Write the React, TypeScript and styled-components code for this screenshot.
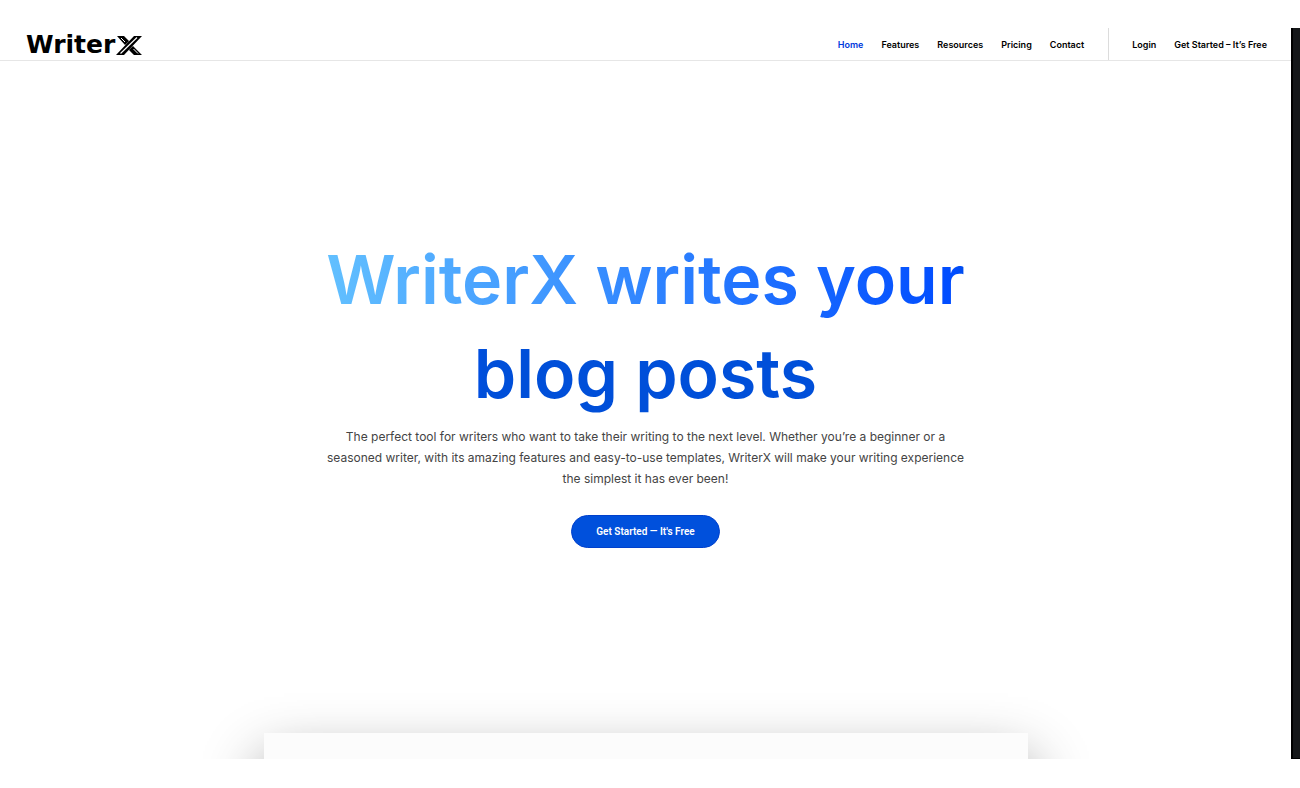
import React from "react";
import styled, { createGlobalStyle } from "styled-components";

const GlobalStyle = createGlobalStyle`
  *, *::before, *::after { box-sizing: border-box; }
  body {
    margin: 0;
    background: #fff;
    color: #0b0b0b;
    font-family: Inter, "Liberation Sans", sans-serif;
  }
  a { color: inherit; text-decoration: none; }
`;

const Frame = styled.div`
  display: flex;
  height: 100vh;
  min-height: 640px;
  padding: 28px 0 29px;
`;

const Page = styled.div`
  flex: 1;
  min-width: 0;
  display: flex;
  flex-direction: column;
  overflow: hidden;
`;

const Edge = styled.div`
  width: 9px;
  background: #151719;
  border: 2px solid #000;
  border-width: 0 0 1px 2px;
`;

const Header = styled.header`
  display: flex;
  flex: none;
  justify-content: space-between;
  height: 33px;
  padding: 0 24px 0 26px;
  border-bottom: 1px solid #e6e6e6;
`;

const Logo = styled.a`
  display: flex;
  align-items: center;
  gap: 1px;
  padding-top: 2px;
  font-family: "DejaVu Sans", sans-serif;
  font-size: 25px;
  font-weight: 700;
  line-height: 30px;
  color: #000;
`;

const Menu = styled.div`
  display: flex;
`;

const LinkGroup = styled.nav<{ $divided?: boolean }>`
  display: flex;
  align-items: center;
  gap: 18px;
  padding-top: 2px;
  padding-left: ${(p) => (p.$divided ? 23 : 0)}px;
  margin-left: ${(p) => (p.$divided ? 24 : 0)}px;
  border-left: ${(p) => (p.$divided ? "1px solid #dcdcdc" : "0")};
`;

const NavLink = styled.a<{ $active?: boolean }>`
  font-size: 9px;
  font-weight: 600;
  line-height: 12px;
  color: ${(p) => (p.$active ? "#0038dc" : "#000")};
`;

const Hero = styled.main`
  display: flex;
  flex-direction: column;
  align-items: center;
  padding-top: 171px;
  text-align: center;
`;

const Title = styled.h1`
  max-width: 700px;
  margin: 0;
  font-size: 68px;
  font-weight: 600;
  line-height: 94px;
`;

const Gradient = styled.span`
  background: linear-gradient(90deg, #62c0ff 0%, #004cff 64%, #004fd9 66%);
  background-clip: text;
  -webkit-background-clip: text;
  color: transparent;
`;

const Lead = styled.p`
  max-width: 650px;
  margin: 6px 0 26px;
  font-size: 12px;
  line-height: 21px;
  color: #444;
`;

const Cta = styled.button`
  height: 33px;
  padding: 0 24px;
  border: 1px solid #0040cc;
  border-radius: 17px;
  background: #0050dc;
  color: #fff;
  font-family: Roboto, sans-serif;
  font-size: 10px;
  font-weight: 600;
  cursor: pointer;
`;

const Preview = styled.section`
  flex: 1 0 400px;
  width: 764px;
  max-width: 90%;
  margin: 185px auto 0;
  background: #fcfcfc;
  box-shadow: 0 28px 56px rgba(0, 0, 0, 0.45);
`;

const LogoMark = () => (
  <svg width="26" height="19" viewBox="0 0 26 19" aria-hidden="true">
    <path d="M0 19L18 0H26L8 19Z M1 0H8L13 5L9 9Z M13 14L17 10L26 19H18Z" fill="#000" />
    <path d="M4.500 17.500L21 1.500" stroke="#fff" strokeWidth="1.100" />
    <path d="M5 2L9 6M17.500 13L22 17.500" stroke="#fff" strokeWidth="1" />
  </svg>
);

const links = ["Home", "Features", "Resources", "Pricing", "Contact"];

export default function App() {
  return (
    <>
      <GlobalStyle />
      <Frame>
        <Page>
          <Header>
            <Logo href="#" aria-label="WriterX">
              Writer
              <LogoMark />
            </Logo>
            <Menu>
              <LinkGroup aria-label="Main">
                {links.map((l) => (
                  <NavLink key={l} href="#" $active={l === "Home"}>{l}</NavLink>
                ))}
              </LinkGroup>
              <LinkGroup $divided aria-label="Account">
                <NavLink href="#">Login</NavLink>
                <NavLink href="#">Get Started – It’s Free</NavLink>
              </LinkGroup>
            </Menu>
          </Header>
          <Hero>
            <Title><Gradient>WriterX writes your blog posts</Gradient></Title>
            <Lead>
              The perfect tool for writers who want to take their writing to the next level. Whether you’re a beginner or a
              seasoned writer, with its amazing features and easy-to-use templates, WriterX will make your writing experience
              the simplest it has ever been!
            </Lead>
            <Cta type="button">Get Started — It's Free</Cta>
          </Hero>
          <Preview aria-label="Preview" />
        </Page>
        <Edge />
      </Frame>
    </>
  );
}
